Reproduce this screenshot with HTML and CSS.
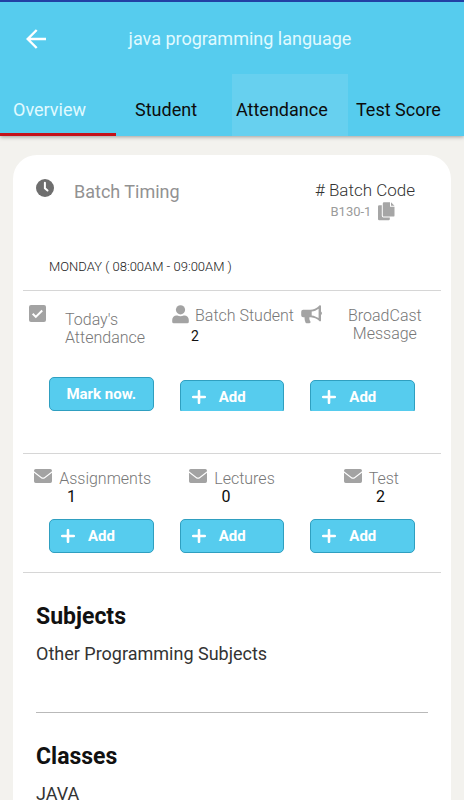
FILE: index.html
```html
<!DOCTYPE html>
<html lang="en">
<head>
<meta charset="utf-8">
<meta name="viewport" content="width=device-width, initial-scale=1">
<title>java programming language</title>
<link rel="stylesheet" href="styles.css">
</head>
<body>
<svg class="sprite" aria-hidden="true">
  <symbol id="mail" viewBox="0 0 18 14"><path d="M1.700 0h14.600A1.700 1.700 0 0 1 18 1.700v.6L10.600 8a2.600 2.600 0 0 1-3.200 0L0 2.300v-.6A1.700 1.700 0 0 1 1.700 0zM0 3.700l6.800 5.200a3.600 3.600 0 0 0 4.400 0L18 3.700v8.600a1.700 1.700 0 0 1-1.700 1.700H1.700A1.700 1.700 0 0 1 0 12.300z"/></symbol>
  <symbol id="plus" viewBox="0 0 14 14"><path d="M7 1.200v11.600M1.200 7h11.600" fill="none" stroke="currentColor" stroke-width="2.600" stroke-linecap="round"/></symbol>
</svg>
<header class="app-bar">
  <div class="title-row">
    <button class="back" type="button" aria-label="Back"><svg width="22" height="22" viewBox="0 0 22 22"><path d="M21 11H3M11.700 2L2.700 11l9 9" fill="none" stroke="currentColor" stroke-width="2.400"/></svg></button>
    <h1 class="title">java programming language</h1>
  </div>
  <nav class="tabs">
    <a class="tab active" href="#overview" aria-current="page">Overview</a>
    <a class="tab student" href="#student">Student</a>
    <a class="tab pressed" href="#attendance">Attendance</a>
    <a class="tab wide" href="#score">Test Score</a>
  </nav>
</header>
<main class="card" id="overview">
  <section class="batch">
    <div class="batch-top">
      <svg class="clock" width="18" height="18" viewBox="0 0 18 18"><circle cx="9" cy="9" r="9"/><path d="M8.900 3.700v5.600l2.600 2.200" fill="none" stroke="#fff" stroke-width="2" stroke-linecap="round"/></svg>
      <h2 class="timing">Batch Timing</h2>
      <div class="code">
        <span class="code-label"># Batch Code</span>
        <span class="code-value">B130-1
          <button class="copy" type="button" aria-label="Copy code"><svg width="17" height="19" viewBox="0 0 17 19"><path d="M1.200 3.300h2.600v10.500a1.600 1.600 0 0 0 1.600 1.600h6.400v1.700a1.200 1.200 0 0 1-1.200 1.200H1.200A1.200 1.200 0 0 1 0 17.100V4.500a1.200 1.200 0 0 1 1.200-1.200zM6 .2h6v4.500h4.500v8.700a1.200 1.200 0 0 1-1.200 1.200H6a1.200 1.200 0 0 1-1.200-1.200v-12A1.200 1.200 0 0 1 6 .2zM13 .2l3.500 3.500H13z"/></svg></button>
        </span>
      </div>
    </div>
    <p class="schedule">MONDAY ( 08:00AM - 09:00AM )</p>
  </section>
  <section class="people">
    <div class="people-heads">
      <div class="head attendance">
        <svg width="17" height="17" viewBox="0 0 17 17"><rect width="17" height="17" rx="2"/><path d="M3.700 8.800l3.100 3.100 6.400-6.400" fill="none" stroke="#fff" stroke-width="2"/></svg>
        <span>Today's<br>Attendance</span>
      </div>
      <div class="head">
        <svg width="17" height="19" viewBox="0 0 17 19"><circle cx="8.500" cy="4.800" r="4.600"/><path d="M4.500 10.600h.8a7.500 7.500 0 0 0 6.400 0h.8a4.300 4.300 0 0 1 4.300 4.300v1.800a1.500 1.500 0 0 1-1.500 1.500H1.700a1.500 1.500 0 0 1-1.500-1.500v-1.800a4.300 4.300 0 0 1 4.300-4.300z"/></svg>
        <span>Batch Student<b class="students">2</b></span>
      </div>
      <div class="head broadcast">
        <svg width="21" height="19" viewBox="0 0 21 19"><path fill-rule="evenodd" d="M18.200.8c.2-.8 1.800-.6 1.800.4v5.400c1.300.6 1.300 2.800 0 3.400v5.400c0 1-1.600 1.200-1.900.3-2.400-2-5.200-3.100-8.200-3.400H8.400c-.2 1.600.1 3 1 4.200.5.800-.1 1.700-1 1.700H5.600c-.5 0-.9-.2-1.100-.7-.8-1.700-1.100-3.400-.9-5.200H2.200A2 2 0 0 1 .2 10.300V6.700a2 2 0 0 1 2-2h7c3.300 0 6.400-1.400 9-3.900zM17.600 3.700c-2.200 1.600-4.400 2.500-6.900 2.800v3.900c2.500.3 4.700 1.200 6.900 2.700z"/></svg>
        <span>BroadCast<br>Message</span>
      </div>
    </div>
    <div class="actions clipped">
      <button class="btn mark" type="button">Mark now.</button>
      <button class="btn" type="button"><svg width="14" height="14"><use href="#plus"/></svg>Add</button>
      <button class="btn" type="button"><svg width="14" height="14"><use href="#plus"/></svg>Add</button>
    </div>
  </section>
  <section class="content">
    <div class="content-heads">
      <div class="head"><svg width="18" height="14"><use href="#mail"/></svg>Assignments</div>
      <div class="head"><svg width="18" height="14"><use href="#mail"/></svg>Lectures</div>
      <div class="head"><svg width="18" height="14"><use href="#mail"/></svg>Test</div>
    </div>
    <div class="counts"><span>1</span><span>0</span><span>2</span></div>
    <div class="actions">
      <button class="btn" type="button"><svg width="14" height="14"><use href="#plus"/></svg>Add</button>
      <button class="btn" type="button"><svg width="14" height="14"><use href="#plus"/></svg>Add</button>
      <button class="btn" type="button"><svg width="14" height="14"><use href="#plus"/></svg>Add</button>
    </div>
  </section>
  <section class="list">
    <h2>Subjects</h2>
    <p>Other Programming Subjects</p>
  </section>
  <section class="list">
    <h2>Classes</h2>
    <p>JAVA</p>
  </section>
</main>
</body>
</html>
```

FILE: styles.css
```css
* { box-sizing: border-box; }
html { background: #f3f2ee; scrollbar-width: none; }
body { margin: 0; font-family: Roboto, "Liberation Sans", sans-serif; color: #222; }
h1, h2, p { margin: 0; font-weight: 400; }
button { font-family: inherit; border: 0; background: none; padding: 0; color: inherit; }
svg { display: block; flex: none; fill: currentColor; }
.sprite { display: none; }

.app-bar { background: #56ccee; border-top: 2px solid #2340a4; box-shadow: 0 1px 4px rgba(0, 0, 0, .35); }
.title-row { display: grid; grid-template-columns: 76px 1fr 60px; align-items: center; height: 72px; padding-top: 1px; color: #fff; }
.back { padding-left: 25px; }
.title { font-size: 18px; line-height: 24px; text-align: center; color: #e0faff; }
.tabs { display: grid; grid-template-columns: repeat(4, 1fr); height: 62px; }
.tab { display: flex; align-items: center; padding: 12px 0 0 4px; border-bottom: 3px solid transparent; font-size: 18px; line-height: 24px; color: #0c0c0c; text-decoration: none; white-space: nowrap; }
.tab.active { padding-left: 13px; color: #e0faff; border-color: #c4121a; }
.tab.student { padding-left: 19px; }
.tab.pressed { background: #67d0ef; }
.tab.wide { padding-left: 8px; }

.card { margin: 19px 13px 0; background: #fff; border-radius: 24px 24px 0 0; }
.batch, .people, .content { margin: 0 10px; border-bottom: 1px solid #d6d6d6; }

.batch { padding: 24px 26px 12px 13px; }
.batch-top { display: flex; align-items: flex-start; height: 77px; }
.clock { color: #6e6e6e; }
.timing { margin: 1px 0 0 20px; font-size: 18px; line-height: 24px; color: #929292; }
.code { display: flex; flex-direction: column; align-items: center; margin-left: auto; }
.code-label { font-size: 17px; line-height: 23px; font-weight: 300; color: #333; }
.code-value { display: flex; align-items: center; gap: 7px; padding-right: 4px; font-size: 13px; line-height: 19px; color: #9b9b9b; }
.copy { color: #a6a6a6; }
.schedule { padding-left: 13px; font-size: 13px; line-height: 22px; font-weight: 300; color: #222; }

.head { display: flex; font-size: 16px; line-height: 18px; font-weight: 300; color: #777; white-space: nowrap; }
.head svg { color: #a3a3a3; }
.people { padding: 13px 0 42px; }
.people-heads { display: grid; grid-template-columns: 143px 129px 1fr; height: 73px; padding-left: 6px; }
.people-heads .head { gap: 6px; padding-top: 1px; }
.people-heads .head span { margin-top: 2px; }
.people-heads .attendance { gap: 19px; }
.people-heads .attendance span { margin-top: 6px; }
.people-heads .broadcast { gap: 26px; }
.broadcast span { text-align: center; }
.students { display: block; margin: 2px 0 0 -4px; font-size: 14px; font-weight: 400; color: #111; }

.actions { display: grid; grid-template-columns: repeat(3, 1fr); gap: 26px; padding: 0 26px; }
.clipped { height: 34px; overflow: hidden; }
.clipped .btn { margin-top: 3px; }
.clipped .mark { margin-top: 0; }
.btn { display: flex; align-items: center; gap: 13px; height: 34px; padding-left: 11px; border: 1px solid #2f9fc0; border-radius: 5px; background: #56ccee; color: #fff; font-size: 15px; line-height: 18px; font-weight: 700; }
.mark { justify-content: center; padding: 0; }

.content { padding: 15px 0 19px; }
.content-heads { display: grid; grid-template-columns: repeat(3, 1fr); }
.content-heads .head { justify-content: center; gap: 7px; line-height: 19px; }
.counts { display: flex; justify-content: space-between; padding: 0 56px 0 44px; font-size: 16px; line-height: 18px; color: #0c0c0c; }
.content .actions { margin-top: 13px; }

.list { margin: 0 23px; padding: 28px 0 46px; border-bottom: 1px solid #b9b9b9; }
.list h2 { font-size: 23px; line-height: 32px; font-weight: 700; color: #111; }
.list p { margin-top: 9px; font-size: 18px; line-height: 24px; color: #333; }
```
